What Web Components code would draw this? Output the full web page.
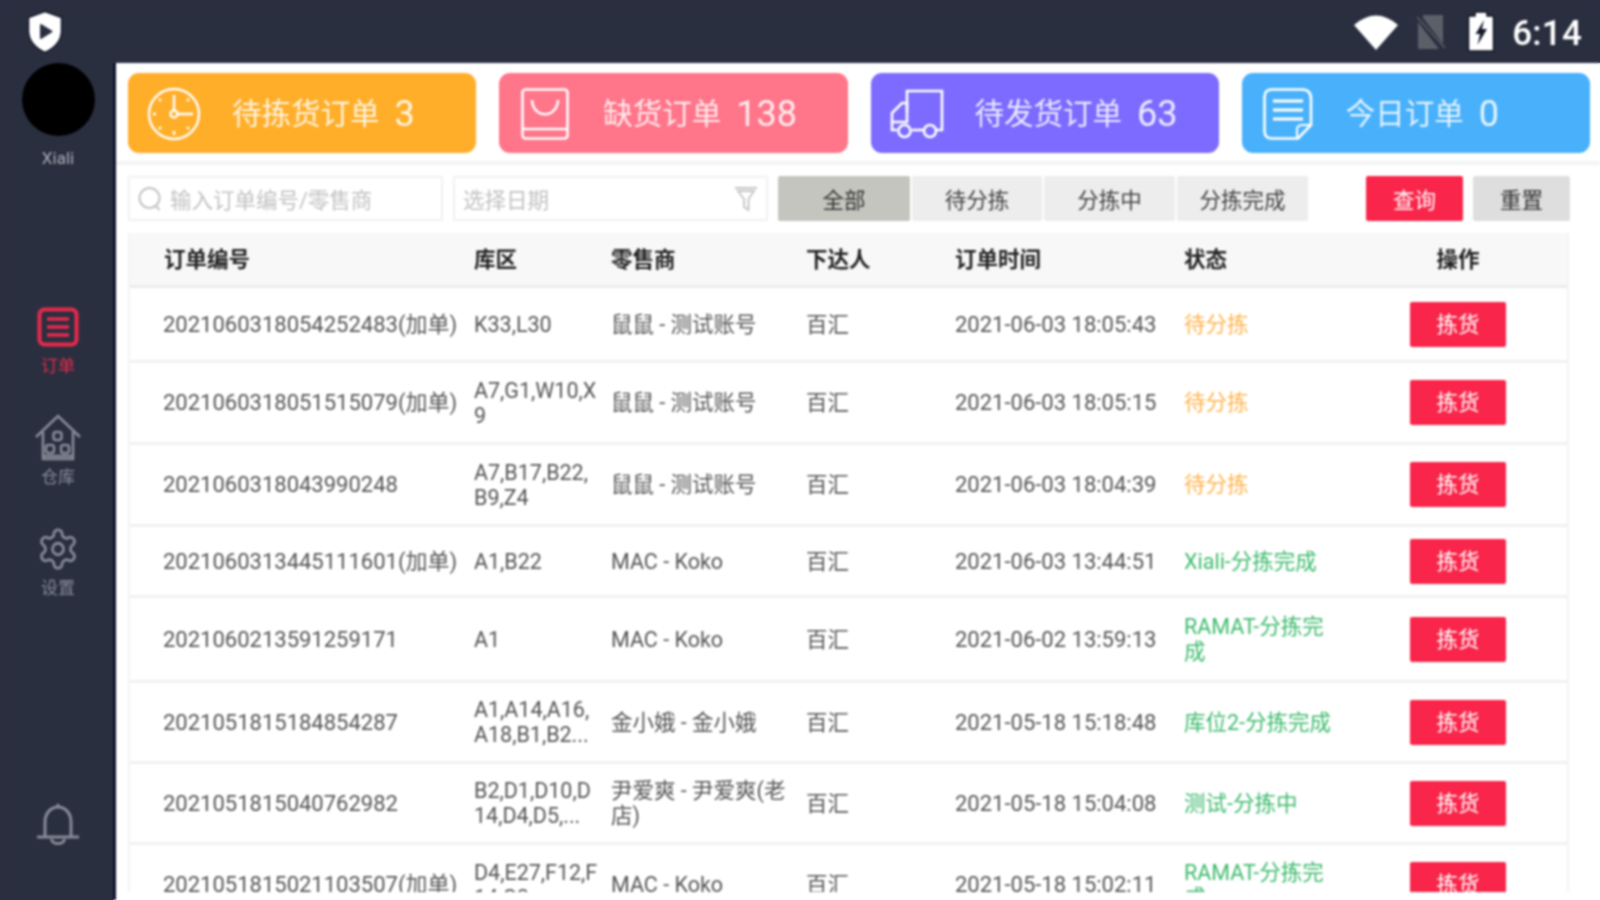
<!DOCTYPE html>
<html lang="zh-CN">
<head>
<meta charset="utf-8">
<title>订单</title>
<style>
html{background:linear-gradient(#2a2f40,#2a2f40) 0 0/100% 63px no-repeat,linear-gradient(#2a2f40,#2a2f40) 0 0/113px 100% no-repeat,#fff}
html,body{margin:0;height:100%;overflow:hidden}
body{font-family:Roboto,"Noto Sans CJK SC",sans-serif}
</style>
</head>
<body>
<app-shell></app-shell>
<script>
const ICON = {
  logo:`<svg width="38" height="44" viewBox="0 0 38 44"><path d="M19 1.5 35.500 7.500V21C35.500 31 28 38.500 19 42.500 10 38.500 2.500 31 2.500 21V7.500Z" fill="#fff" stroke="#15192a" stroke-width="1.500"/><circle cx="20" cy="21" r="9" fill="#fff"/><path d="M15 15 25.500 21.500 15 28Z" fill="#2a2f40" stroke="#2a2f40" stroke-width="2" stroke-linejoin="round"/></svg>`,
  wifi:`<svg width="44" height="36" viewBox="0 0 44 36"><path d="M0 11Q22-8 44 11L22 36Z" fill="#fff"/></svg>`,
  sim:`<svg width="33" height="36" viewBox="0 0 33 36"><path d="M9 1H29V30L9 4ZM4 8 25 35H4Z" fill="#5b5f68"/><path d="M1 2 32 35" stroke="#2a2f40" stroke-width="2"/><path d="M3 3 31 34" stroke="#5b5f68" stroke-width="1.500"/></svg>`,
  battery:`<svg width="28" height="41" viewBox="0 0 28 41"><path d="M8 1H20V5H26.500V40H1.500V5H8Z" fill="#fff" stroke="#111522" stroke-width="1.500"/><path d="M17 9 8.500 23H13L10.500 34 20 18H15Z" fill="#15192a"/></svg>`,
  orders:`<svg width="42" height="40" viewBox="0 0 42 40" fill="none" stroke="currentColor"><rect x="2.500" y="2.500" width="37" height="35" rx="5" stroke-width="4"/><path d="M10 12H32M10 20H32M10 28H32" stroke-width="3.500"/></svg>`,
  house:`<svg width="48" height="48" viewBox="0 0 48 48" fill="none" stroke="currentColor" stroke-width="2.600"><path d="M2 23 24 2 46 23"/><path d="M9 18V45H39V18"/><rect x="19.500" y="18" width="8" height="8" rx="2.500"/><rect x="12" y="31" width="8" height="8" rx="2.500"/><rect x="27" y="31" width="8" height="8" rx="2.500"/><path d="M9 42H39"/></svg>`,
  gear:`<svg width="44" height="46" viewBox="0 0 24 24" preserveAspectRatio="none" fill="none" stroke="currentColor" stroke-width="1.500"><path d="M12.220 2h-.44a2 2 0 0 0-2 2v.18a2 2 0 0 1-1 1.730l-.43.25a2 2 0 0 1-2 0l-.15-.08a2 2 0 0 0-2.730.73l-.22.38a2 2 0 0 0 .73 2.730l.15.1a2 2 0 0 1 1 1.720v.51a2 2 0 0 1-1 1.740l-.15.09a2 2 0 0 0-.73 2.730l.22.38a2 2 0 0 0 2.730.73l.15-.08a2 2 0 0 1 2 0l.43.25a2 2 0 0 1 1 1.730V20a2 2 0 0 0 2 2h.44a2 2 0 0 0 2-2v-.18a2 2 0 0 1 1-1.730l.43-.25a2 2 0 0 1 2 0l.15.08a2 2 0 0 0 2.730-.73l.22-.39a2 2 0 0 0-.73-2.730l-.15-.08a2 2 0 0 1-1-1.740v-.5a2 2 0 0 1 1-1.740l.15-.09a2 2 0 0 0 .73-2.730l-.22-.38a2 2 0 0 0-2.730-.73l-.15.08a2 2 0 0 1-2 0l-.43-.25a2 2 0 0 1-1-1.730V4a2 2 0 0 0-2-2z"/><circle cx="12" cy="12" r="3"/></svg>`,
  bell:`<svg width="42" height="46" viewBox="0 0 42 46" fill="none" stroke="currentColor" stroke-width="3"><path d="M8 35V20C8 11 14 5 21 5S34 11 34 20V35"/><path d="M1 35H41" stroke-linecap="round"/><path d="M14.500 37C15 43 27 43 27.500 37"/><circle cx="21" cy="3" r="1.500" fill="currentColor" stroke="none"/></svg>`,
  clock:`<svg width="54" height="54" viewBox="0 0 54 54" fill="none" stroke="#fff" stroke-width="2.400"><circle cx="27" cy="27" r="25"/><circle cx="27" cy="27" r="3.500"/><path d="M27 8V23.500M30.500 27H46M27 44V48M6 27H9M12 12l2 2M42 12l-2 2M12 42l2-2M42 42l-2-2"/></svg>`,
  bag:`<svg width="48" height="52" viewBox="0 0 48 52" fill="none" stroke="#fff" stroke-width="2.600"><rect x="1.500" y="1.500" width="45" height="49" rx="3"/><path d="M1.500 41H46.500M11 12C12 31 36 31 37 12"/></svg>`,
  truck:`<svg width="54" height="50" viewBox="0 0 54 50" fill="none" stroke="#fff" stroke-width="2.600"><path d="M17 23V2H52V41H47"/><path d="M33 41H22"/><path d="M7 41H2V24L12 14H17V33H2"/><circle cx="14.500" cy="42" r="6"/><circle cx="40" cy="42" r="6"/></svg>`,
  doc:`<svg width="50" height="52" viewBox="0 0 50 52" fill="none" stroke="#fff" stroke-width="2.600"><path d="M9 1.500H39Q48 1.500 48 11V37L35 50.500H9Q1.500 50.500 1.500 43V9Q1.500 1.500 9 1.500Z"/><path d="M10 13H40M10 22H40M10 31H40" stroke-width="2.800"/><path d="M34 49V42Q34 37 39 37H47" stroke-width="2"/></svg>`,
  search:`<svg width="24" height="26" viewBox="0 0 24 26" fill="none" stroke="#c4c4c4" stroke-width="2"><circle cx="11.500" cy="12" r="10"/><path d="M18 20l3.500 4"/></svg>`,
  funnel:`<svg width="24" height="26" viewBox="0 0 24 26" fill="none" stroke="#c4c4c4" stroke-width="1.800"><path d="M1 2H23M4 5H20L14.500 13V24L10 21V13Z"/></svg>`
};

function make(name, css, html){
  customElements.define(name, class extends HTMLElement{
    constructor(){
      super();
      const root=this.attachShadow({mode:'open'});
      const read=k=>this.getAttribute(k)||'';
      root.innerHTML=`<style>${css}</style>`+(typeof html==='function'?html(read):html);
    }
  });
}

make('status-bar',`
  :host{display:flex;align-items:center;height:63px;background:#2a2f40;color:#fff;padding:0 18px 0 26px;box-sizing:border-box}
  .right{margin-left:auto;display:flex;align-items:center}
  .wifi{margin-right:16px;display:flex}.sim{margin-right:20px;display:flex}.bat{margin-right:17px;display:flex}
  .time{font-size:35px;line-height:62px;font-weight:500;letter-spacing:.2px;padding-top:4px}
`,`<span style="display:flex">${ICON.logo}</span>
  <div class="right"><span class="wifi">${ICON.wifi}</span><span class="sim">${ICON.sim}</span><span class="bat">${ICON.battery}</span><span class="time">6:14</span></div>`);

make('nav-item',`
  :host{display:flex;flex-direction:column;align-items:center;height:111px;color:#868a96}
  :host([active]){color:#e8294c}
  .i{height:50px;display:flex;align-items:center;justify-content:center}
  .l{font-size:17px;line-height:24px;margin-top:2px}
`,r=>`<div class="i">${ICON[r('icon')]}</div><div class="l">${r('label')}</div>`);

make('side-nav',`
  :host{display:flex;flex-direction:column;align-items:center;width:116px;box-sizing:border-box;background:#2a2f40;border-right:3px solid #10152f;padding:0 0 52px 3px;min-height:0}
  .avatar{width:73px;height:73px;border-radius:50%;background:#000}
  .name{font-size:17px;line-height:24px;color:#a9abb3;margin-top:10px;margin-bottom:132px}
  .bell{margin-top:auto;color:#868a96;display:flex}
`,`<div class="avatar"></div><div class="name">Xiali</div>
  <nav-item icon="orders" label="订单" active></nav-item>
  <nav-item icon="house" label="仓库"></nav-item>
  <nav-item icon="gear" label="设置"></nav-item>
  <div class="bell">${ICON.bell}</div>`);

make('stat-card',`
  :host{flex:1 1 0;display:grid;grid-template-columns:92px 12px auto;align-items:center;height:80px;border-radius:11px;color:rgba(255,255,255,.86);background:var(--c)}
  .i{display:flex;justify-content:center;height:54px;align-items:center;grid-column:1}
  .t{grid-column:3;font-size:29.500px;line-height:80px;white-space:nowrap;display:flex;align-items:center;gap:15px;padding-top:1px}
  .n{font-size:36px}
`,r=>`<div class="i">${ICON[r('icon')]}</div><div class="t"><span>${r('label')}</span><span class="n">${r('num')}</span></div>`);

make('stat-row',`
  :host{display:flex;gap:23px;padding:10px 10px 8px 12px;border-bottom:4px solid #f4f4f4}
`,`<stat-card icon="clock" label="待拣货订单" num="3" style="--c:#ffae29"></stat-card>
   <stat-card icon="bag" label="缺货订单" num="138" style="--c:#ff7589"></stat-card>
   <stat-card icon="truck" label="待发货订单" num="63" style="--c:#7d6bff"></stat-card>
   <stat-card icon="doc" label="今日订单" num="0" style="--c:#49b1fb"></stat-card>`);

make('field-box',`
  :host{display:flex;align-items:center;width:315px;height:45px;box-sizing:border-box;border:2px solid #f1f1f1;padding:0 8px;color:#c2c2c2;font-size:21.500px}
  .ph{flex:1;margin-left:8px;white-space:nowrap}
  :host([plain]) .ph{margin-left:0}
`,r=>`${r('lead')?ICON[r('lead')]:''}<span class="ph">${r('text')}</span>${r('trail')?ICON[r('trail')]:''}`);

make('tab-btn',`
  :host{display:flex;align-items:center;justify-content:center;height:45px;width:var(--w,130px);background:#ededed;color:#444;font-size:21.500px;border-radius:2px}
  :host([on]){background:#c5c5bf;color:#333}
  :host([kind=query]){background:#f9254a;color:#fff}
  :host([kind=reset]){background:#dedede;color:#333}
`,`<slot></slot>`);

make('filter-bar',`
  :host{display:flex;align-items:center;margin:11px 30px 12px 12px;height:45px}
  .tabs{display:flex;gap:2px;margin-left:10px}
  .acts{margin-left:auto;display:flex;gap:10px}
  field-box+field-box{margin-left:10px}
`,`<field-box lead="search" text="输入订单编号/零售商"></field-box>
  <field-box plain text="选择日期" trail="funnel"></field-box>
  <div class="tabs"><tab-btn on style="--w:132px">全部</tab-btn><tab-btn>待分拣</tab-btn><tab-btn style="--w:131px">分拣中</tab-btn><tab-btn style="--w:131px">分拣完成</tab-btn></div>
  <div class="acts"><tab-btn kind="query" style="--w:97px">查询</tab-btn><tab-btn kind="reset" style="--w:97px">重置</tab-btn></div>`);

const COLS='grid-template-columns:344px 137px 195px 149px 229px 163px 222px;';
make('table-head',`
  :host{display:grid;${COLS}align-items:center;height:52px;box-sizing:content-box;background:#f8f8f8;border-bottom:3px solid #ececec;font-size:21.500px;font-weight:700;color:#222;padding-bottom:0}
  div{margin-top:-4px}
  .a{padding-left:34px}
  .c{text-align:center}
`,`<div class="a">订单编号</div><div>库区</div><div>零售商</div><div>下达人</div><div>订单时间</div><div>状态</div><div class="c">操作</div>`);

make('order-row',`
  :host{display:grid;${COLS}align-items:center;box-sizing:border-box;height:var(--h);border-bottom:3px solid #f1f1f1;font-size:21.500px;line-height:25px;color:#565656}
  .first{padding-left:33px;white-space:nowrap;font-size:22px}
  .nw{white-space:nowrap}
  .tm{font-size:22px}
  .st{padding-right:8px}
  .wait{color:#ffb54d}.done{color:#3fbb6e}
  .act{display:flex;justify-content:center}
  .btn{display:flex;align-items:center;justify-content:center;width:96px;height:45px;background:#f9254a;color:#fff;border-radius:2px}
`,r=>`<div class="first">${r('order')}</div><div class="nw">${r('zone').split('|').join('<br>')}</div><div class="nw">${r('shop').split('|').join('<br>')}</div><div>百汇</div><div class="nw tm">${r('time')}</div><div class="st ${r('kind')} nw">${r('status').split('|').join('<br>')}</div><div class="act"><div class="btn">拣货</div></div>`);

const ROWS=[
 [75,'2021060318054252483(加单)','K33,L30','鼠鼠 - 测试账号','2021-06-03 18:05:43','待分拣','wait'],
 [82,'2021060318051515079(加单)','A7,G1,W10,X|9','鼠鼠 - 测试账号','2021-06-03 18:05:15','待分拣','wait'],
 [82,'2021060318043990248','A7,B17,B22,|B9,Z4','鼠鼠 - 测试账号','2021-06-03 18:04:39','待分拣','wait'],
 [71,'2021060313445111601(加单)','A1,B22','MAC - Koko','2021-06-03 13:44:51','Xiali-分拣完成','done'],
 [85,'2021060213591259171','A1','MAC - Koko','2021-06-02 13:59:13','RAMAT-分拣完|成','done'],
 [81,'2021051815184854287','A1,A14,A16,|A18,B1,B2...','金小娥 - 金小娥','2021-05-18 15:18:48','库位2-分拣完成','done'],
 [81,'2021051815040762982','B2,D1,D10,D|14,D4,D5,...','尹爱爽 - 尹爱爽(老|店)','2021-05-18 15:04:08','测试-分拣中','done'],
 [82,'2021051815021103507(加单)','D4,E27,F12,F|14,G3,...','MAC - Koko','2021-05-18 15:02:11','RAMAT-分拣完|成','done']
];
make('order-table',`
  :host{display:block;flex:1;min-height:0;overflow:hidden;margin:0 31px 8px 12px;border:solid #f3f3f3;border-width:0 2px}
`,`<table-head></table-head>`+ROWS.map(r=>`<order-row style="--h:${r[0]}px" order="${r[1]}" zone="${r[2]}" shop="${r[3]}" time="${r[4]}" status="${r[5]}" kind="${r[6]}"></order-row>`).join(''));

make('app-shell',`
  :host{display:grid;grid-template-columns:116px 1fr;grid-template-rows:63px 837px;width:1600px;height:900px;overflow:hidden;filter:blur(.9px);background:#fff}
  status-bar{grid-column:1/3}
  main{display:flex;flex-direction:column;min-width:0;min-height:0;background:#fff}
`,`<status-bar></status-bar><side-nav></side-nav><main><stat-row></stat-row><filter-bar></filter-bar><order-table></order-table></main>`);
</script>
</body>
</html>
